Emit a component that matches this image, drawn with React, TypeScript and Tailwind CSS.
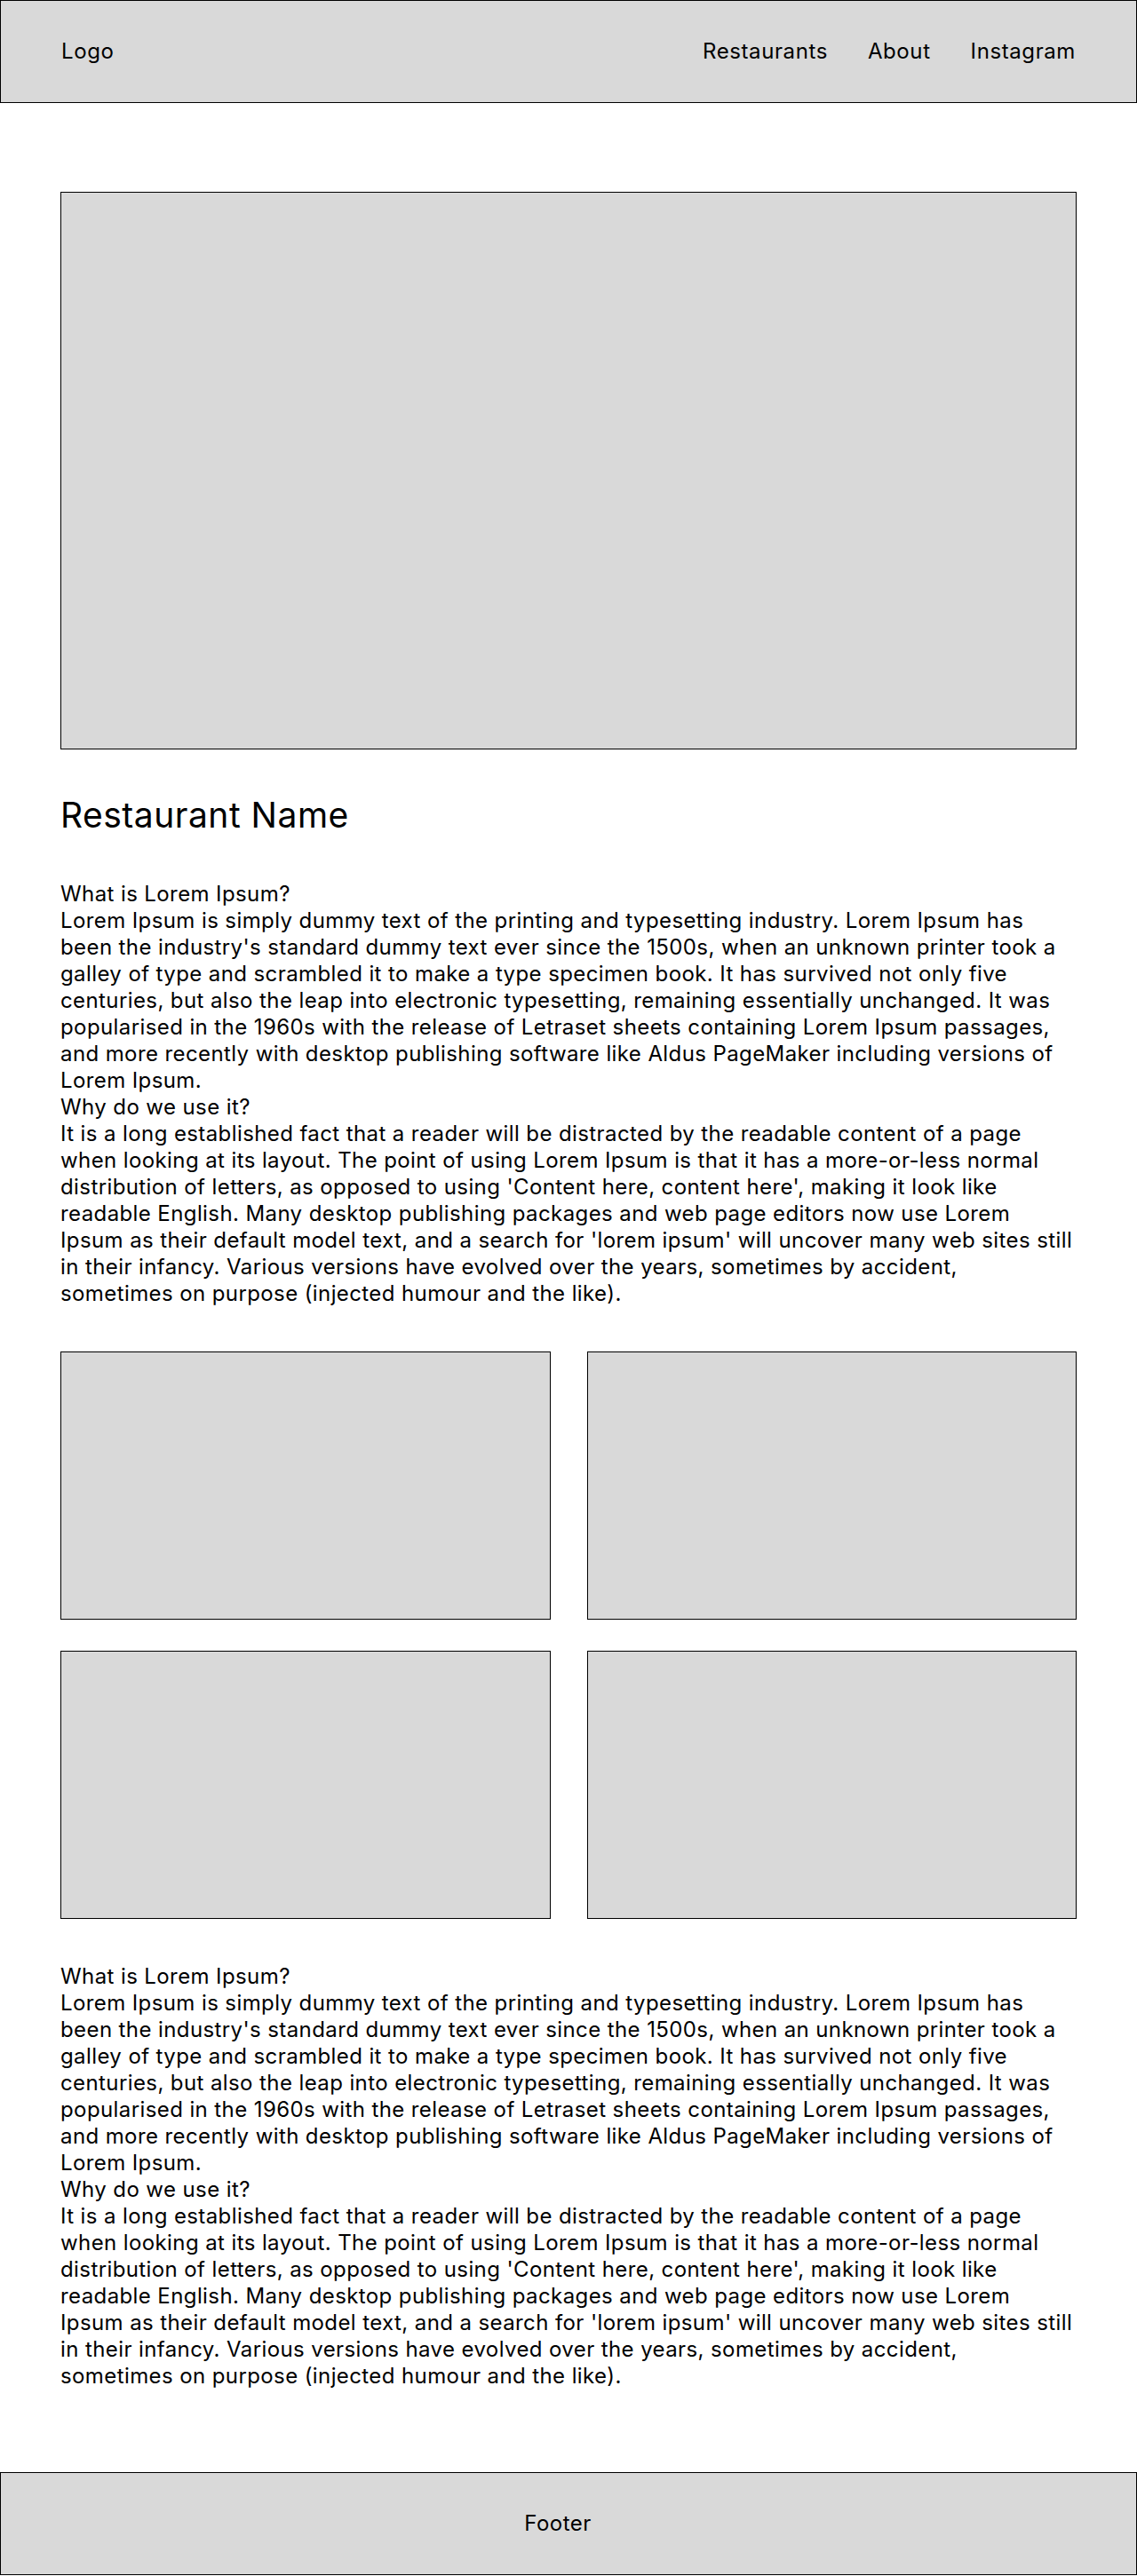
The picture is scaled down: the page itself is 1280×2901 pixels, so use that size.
import React from "react";

const LINES = [
  "What is Lorem Ipsum?",
  "Lorem Ipsum is simply dummy text of the printing and typesetting industry. Lorem Ipsum has",
  "been the industry's standard dummy text ever since the 1500s, when an unknown printer took a",
  "galley of type and scrambled it to make a type specimen book. It has survived not only five",
  "centuries, but also the leap into electronic typesetting, remaining essentially unchanged. It was",
  "popularised in the 1960s with the release of Letraset sheets containing Lorem Ipsum passages,",
  "and more recently with desktop publishing software like Aldus PageMaker including versions of",
  "Lorem Ipsum.",
  "Why do we use it?",
  "It is a long established fact that a reader will be distracted by the readable content of a page",
  "when looking at its layout. The point of using Lorem Ipsum is that it has a more-or-less normal",
  "distribution of letters, as opposed to using 'Content here, content here', making it look like",
  "readable English. Many desktop publishing packages and web page editors now use Lorem",
  "Ipsum as their default model text, and a search for 'lorem ipsum' will uncover many web sites still",
  "in their infancy. Various versions have evolved over the years, sometimes by accident,",
  "sometimes on purpose (injected humour and the like).",
];

function TextBlock() {
  return (
    <div className="text-[24px] leading-[30px] tracking-[0.4px] text-black">
      {LINES.map((l, i) => (
        <p key={i} className="whitespace-nowrap">
          {l}
        </p>
      ))}
    </div>
  );
}

export default function App() {
  return (
    <div className="w-[1280px] bg-white text-black" style={{ fontFamily: "Inter, 'Noto Sans', sans-serif" }}>
      <header className="h-[116px] border border-black bg-[#d9d9d9] flex items-center justify-between px-[68px] text-[24px] tracking-[0.6px]">
        <span>Logo</span>
        <nav className="flex items-center gap-[45px]">
          <span>Restaurants</span>
          <span>About</span>
          <span>Instagram</span>
        </nav>
      </header>
      <main className="px-[68px] pt-[100px] pb-[93px] flex flex-col gap-[50px]">
        <div className="h-[628px] border border-black bg-[#d9d9d9]" />
        <h1 className="text-[39px] leading-[48px] tracking-[0.5px]">Restaurant Name</h1>
        <TextBlock />
        <div className="grid grid-cols-2 gap-x-[41px] gap-y-[35px]">
          <div className="h-[302px] border border-black bg-[#d9d9d9]" />
          <div className="h-[302px] border border-black bg-[#d9d9d9]" />
          <div className="h-[302px] border border-black bg-[#d9d9d9]" />
          <div className="h-[302px] border border-black bg-[#d9d9d9]" />
        </div>
        <TextBlock />
      </main>
      <footer className="h-[116px] border border-black bg-[#d9d9d9] flex items-center justify-center pr-[24px] text-[24px] tracking-[0.5px]">
        <span>Footer</span>
      </footer>
    </div>
  );
}
